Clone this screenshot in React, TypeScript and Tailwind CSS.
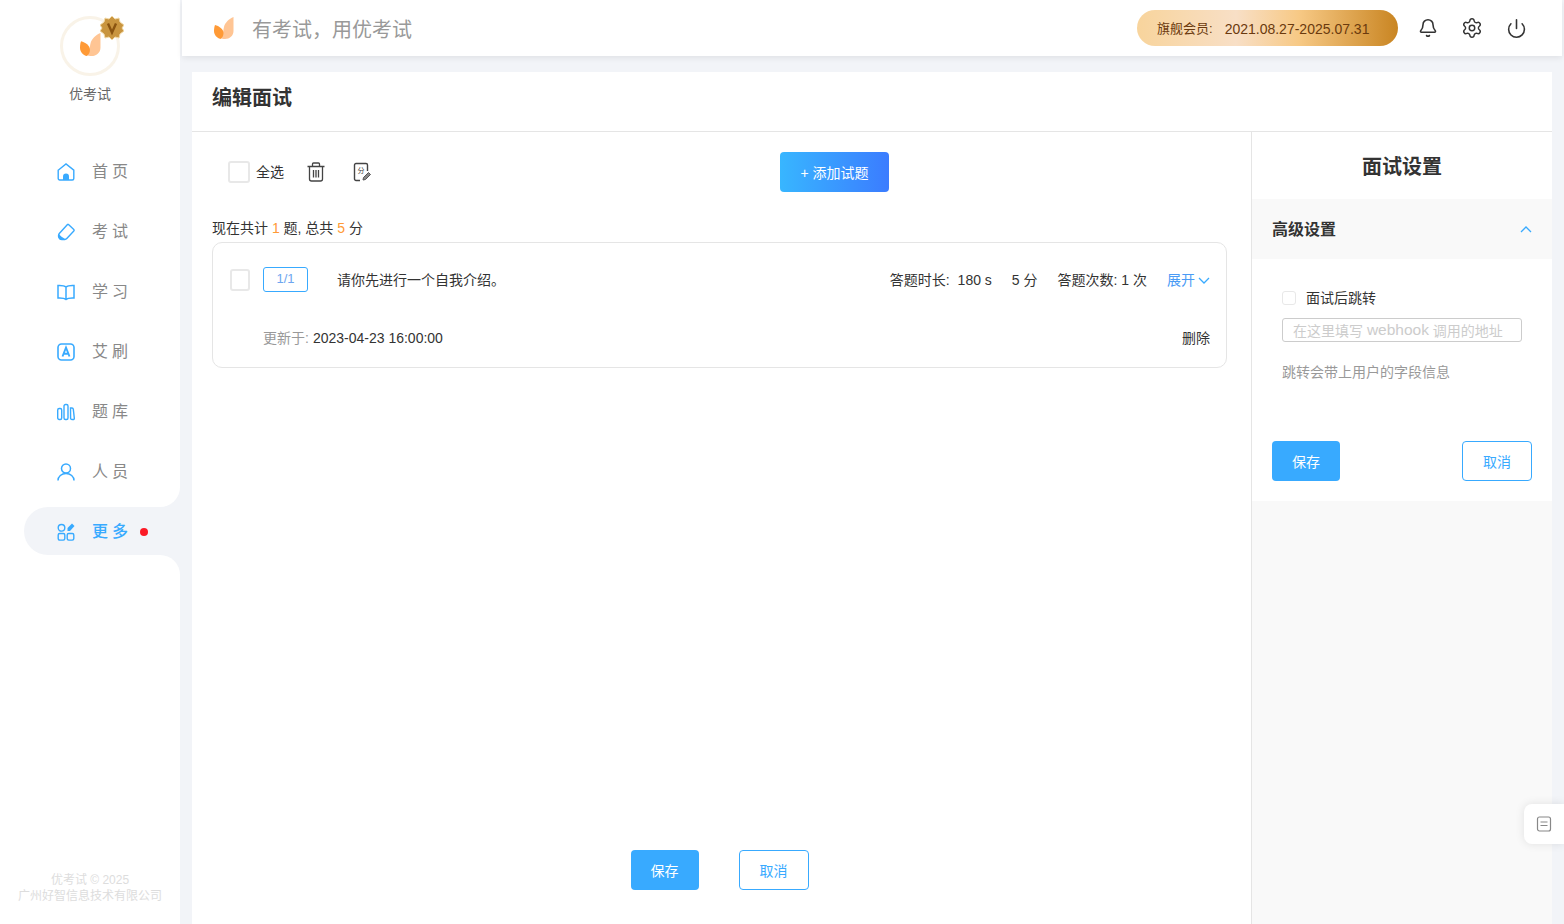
import { Bell, Power, Settings } from "lucide-react";
import type { ReactNode } from "react";

function Leaf({ className }: { className: string }) {
  return (
    <svg viewBox="0 0 20 22" className={className}>
      <path d="M19.5 0C19.5 0 19.5 14 19.5 14C19.5 18.8 15.5 22 11 22C9 22 7.5 21.6 6.5 21C9.5 18 9 14 10 10C11 5.5 15 2 19.5 0Z" fill="#ffc594" />
      <path d="M1 8C5 9 9.5 12 9.5 16C9.5 18.5 8.5 20.5 6.5 22C3 21 0 18 0 14C0 11.5 .4 9.5 1 8Z" fill="#ff9a36" />
    </svg>
  );
}

function Badge() {
  return (
    <svg viewBox="0 0 24 24" className="absolute -right-[7px] -top-[3px] h-6 w-6">
      <path
        d="M12 0l3 3 4-1 1 4 4 3-2 3 2 3-4 3-1 4-4-1-3 3-3-3-4 1-1-4-4-3 2-3-2-3 4-3 1-4 4 1z"
        fill="#c9953f"
        stroke="#f1d9a8"
        strokeWidth="1"
      />
      <path d="M8 7.5l4 9 4-9" fill="none" stroke="#8a5410" strokeWidth="2.4" />
    </svg>
  );
}

const iconBase = "h-[18px] w-[18px] shrink-0 text-[#38aaff]";

function HomeIcon() {
  return (
    <svg viewBox="0 0 18 18" fill="none" stroke="currentColor" strokeWidth="1.4" className={iconBase}>
      <path d="M1.2 7.2L9 1l7.800 6.200V15.500a1.500 1.500 0 0 1-1.500 1.500H2.700a1.500 1.500 0 0 1-1.500-1.500z" />
      <path d="M6 17v-3.500a3 3 0 0 1 6 0V17z" fill="currentColor" stroke="none" />
    </svg>
  );
}

function EraserIcon() {
  return (
    <svg viewBox="0 0 18 18" fill="none" stroke="currentColor" strokeWidth="1.4" className={iconBase}>
      <path d="M11.500 1.500l5.300 5a1 1 0 0 1 0 1.500l-7 7.500a3 3 0 0 1-2 1H5a3.500 3.500 0 0 1-3.500-3.500c0-1.200.4-2 1-2.700l8-8.800z" />
      <path d="M1.500 10.500c2 2.500 4 4 6.500 5.500-.7.700-1.500 1-2.500 1H5a3.500 3.500 0 0 1-3.500-3.500z" fill="currentColor" stroke="none" />
    </svg>
  );
}

function BookIcon() {
  return (
    <svg viewBox="0 0 18 18" fill="none" stroke="currentColor" strokeWidth="1.5" className={iconBase}>
      <path d="M9 4C7.500 2.700 5 2.300 1 2.500V15c4-.2 6.500.1 8 1.400 1.500-1.300 4-1.600 8-1.400V2.500C13 2.300 10.500 2.700 9 4zM9 4v12.500" />
    </svg>
  );
}

function AiIcon() {
  return (
    <svg viewBox="0 0 18 18" fill="none" stroke="currentColor" className={iconBase}>
      <rect x="1" y="1" width="16" height="16" rx="3.500" strokeWidth="1.600" />
      <path d="M5.500 13.500L9 4.500l3.500 9M6.800 10.800h4.400" strokeWidth="1.900" />
    </svg>
  );
}

function BarsIcon() {
  return (
    <svg viewBox="0 0 18 18" fill="none" stroke="currentColor" strokeWidth="1.400" className={iconBase}>
      <rect x="0.700" y="5.500" width="4" height="11" rx="1.500" />
      <rect x="7" y="1.500" width="4" height="15" rx="1.500" />
      <path d="M13.500 5h1.500c.8 0 1.200.5 1.300 1.200l1 9c.1.800-.4 1.300-1.200 1.300h-1.100c-.8 0-1.300-.4-1.400-1.200z" />
    </svg>
  );
}

function UserIcon() {
  return (
    <svg viewBox="0 0 18 18" fill="none" stroke="currentColor" strokeWidth="1.500" className={iconBase}>
      <circle cx="9" cy="5.500" r="4.500" />
      <path d="M1 17.500c0-4 3.500-7 8-7s8 3 8 7" />
    </svg>
  );
}

function GridIcon() {
  return (
    <svg viewBox="0 0 18 18" fill="none" stroke="currentColor" strokeWidth="1.400" className={iconBase}>
      <circle cx="4.500" cy="4.800" r="3.300" />
      <rect x="1.200" y="10.500" width="6.600" height="6.600" rx="1.500" />
      <rect x="10.200" y="10.500" width="6.600" height="6.600" rx="1.500" />
      <path d="M10.500 8V5l4.500-4.500 2.500 2.500-4.500 5z" fill="currentColor" stroke="none" />
    </svg>
  );
}

function Chevron({ up = false }: { up?: boolean }) {
  return (
    <svg viewBox="0 0 12 7" fill="none" stroke="#38aaff" strokeWidth="1.300" className="h-[7px] w-3 shrink-0">
      <path d={up ? "M1 6l5-5 5 5" : "M1 1l5 5 5-5"} />
    </svg>
  );
}

const navItems: { label: string; icon: ReactNode }[] = [
  { label: "首页", icon: <HomeIcon /> },
  { label: "考试", icon: <EraserIcon /> },
  { label: "学习", icon: <BookIcon /> },
  { label: "艾刷", icon: <AiIcon /> },
  { label: "题库", icon: <BarsIcon /> },
];

function NavRow({ label, icon, className = "" }: { label: string; icon: ReactNode; className?: string }) {
  return (
    <div className={`flex h-[60px] items-center gap-[17px] pl-[57px] ${className}`}>
      {icon}
      <span className="text-base tracking-[4px] text-[#888888]">{label}</span>
    </div>
  );
}

function Sidebar() {
  return (
    <aside className="flex w-[180px] shrink-0 flex-col bg-[#f2f4f8]">
      <div className="rounded-br-[20px] bg-white">
        <div className="flex h-[142px] flex-col items-center pt-4">
          <div className="relative flex h-[60px] w-[60px] items-center justify-center rounded-full border-[3px] border-[#f9f3e8] bg-white">
            <Leaf className="mb-[3px] h-[25px] w-[21px]" />
            <Badge />
          </div>
          <span className="mt-2 text-sm leading-5 text-[#666666]">优考试</span>
        </div>
        {navItems.map((item) => (
          <NavRow key={item.label} label={item.label} icon={item.icon} />
        ))}
        <NavRow label="人员" icon={<UserIcon />} className="box-content pb-[5px]" />
      </div>
      <div className="bg-white">
        <div className="ml-6 flex h-12 items-center gap-[17px] rounded-l-[24px] bg-[#f2f4f8] pl-[33px] pt-px">
          <GridIcon />
          <span className="text-base font-medium tracking-[4px] text-[#38aaff]">更多</span>
          <span className="-ml-[9px] mt-[1px] h-2 w-2 rounded-full bg-[#fb1a26]" />
        </div>
      </div>
      <div className="flex flex-1 flex-col items-center justify-end rounded-tr-[20px] bg-white pb-5 text-xs leading-4 text-[#dddddd]">
        <span>优考试 © 2025</span>
        <span>广州好智信息技术有限公司</span>
      </div>
    </aside>
  );
}

function Header() {
  return (
    <header className="flex h-14 shrink-0 items-center bg-white pl-8 pr-6 shadow-[0_2px_6px_rgba(0,0,0,0.08)]">
      <Leaf className="h-[22px] w-5" />
      <span className="ml-[18px] pt-1 text-xl text-[#999999]">有考试，用优考试</span>
      <div className="ml-auto flex h-9 w-[261px] items-center rounded-full bg-[linear-gradient(90deg,#f8d49c_0%,#f8dfc6_38%,#f7c985_62%,#c98522_100%)] pl-5 pt-[2px] text-sm text-[#6b3a0e]">
        <span className="text-[13px]">旗舰会员:</span>
        <span className="ml-3">2021.08.27-2025.07.31</span>
      </div>
      <div className="ml-2 flex items-center text-[#333333]">
        <span className="flex w-11 justify-center">
          <Bell size={20} strokeWidth={1.900} />
        </span>
        <span className="flex w-11 justify-center">
          <Settings size={22} strokeWidth={1.600} />
        </span>
        <span className="flex w-11 justify-center">
          <Power size={21} strokeWidth={1.800} />
        </span>
      </div>
    </header>
  );
}

function Checkbox({ className }: { className: string }) {
  return <span className={`block shrink-0 rounded-[3px] border-2 border-[#e8e8e8] bg-white ${className}`} />;
}

function SaveButton() {
  return (
    <button className="h-10 w-[68px] rounded bg-[#38aaff] pt-px text-sm text-white">保存</button>
  );
}

function CancelButton() {
  return (
    <button className="h-10 w-[70px] rounded border border-[#38aaff] bg-white pt-px text-sm text-[#38aaff]">取消</button>
  );
}

function TrashIcon() {
  return (
    <svg viewBox="0 0 18 20" fill="none" stroke="#444444" strokeWidth="1.300" className="h-5 w-[18px]">
      <path d="M0.500 4.500h17M5.500 4.500V2a1 1 0 0 1 1-1h5a1 1 0 0 1 1 1v2.500" />
      <path d="M2.500 4.500V17a2 2 0 0 0 2 2h9a2 2 0 0 0 2-2V4.500" />
      <path d="M6.500 8v7.500M9 8v7.500M11.500 8v7.500" />
    </svg>
  );
}

function FileScoreIcon() {
  return (
    <svg viewBox="0 0 18 20" fill="none" stroke="#444444" strokeWidth="1.400" className="h-5 w-[18px]">
      <path d="M7 18.500H3a1.500 1.500 0 0 1-1.500-1.500V3A1.500 1.500 0 0 1 3 1.500h10A1.500 1.500 0 0 1 14.500 3v6" />
      <text x="4.500" y="11" fontSize="7" fill="#444444" stroke="none">分</text>
      <path d="M10 18l.5-2.500 5-5 2 2-5 5z" fill="#888888" stroke="#555555" strokeWidth="1" />
    </svg>
  );
}

function QuestionCard() {
  return (
    <div className="mt-1 h-[126px] rounded-[10px] border border-[#e5e5e5] pl-[17px] pr-4 text-sm text-[#333333]">
      <div className="flex h-[73px] items-center">
        <Checkbox className="h-[22px] w-5" />
        <span className="ml-[13px] flex h-[25px] w-[45px] items-center justify-center rounded-[3px] border border-[#38aaff] text-[13px] text-[#6ea6f0]">
          1/1
        </span>
        <span className="ml-[29px]">请你先进行一个自我介绍。</span>
        <div className="ml-auto flex items-center">
          <span>答题时长:</span>
          <span className="ml-2">180 s</span>
          <span className="ml-5">5 分</span>
          <span className="ml-5">答题次数: 1 次</span>
          <span className="ml-5 text-[#4a9bf5]">展开</span>
          <span className="ml-[3px] mt-[2px]">
            <Chevron />
          </span>
        </div>
      </div>
      <div className="flex items-center pl-[33px] pt-3">
        <span className="text-[#999999]">更新于:</span>
        <span className="ml-1">2023-04-23 16:00:00</span>
        <span className="ml-auto">删除</span>
      </div>
    </div>
  );
}

function SettingsPanel() {
  return (
    <section className="flex w-[301px] shrink-0 flex-col border-l border-[#e5e5e5] bg-[#f9f9f9]">
      <h2 className="flex h-[67px] shrink-0 items-center justify-center bg-white pt-[2px] text-xl font-bold text-[#333333]">
        面试设置
      </h2>
      <div className="flex h-[60px] shrink-0 items-center justify-between pl-5 pr-5">
        <span className="pt-[2px] text-base font-bold text-[#333333]">高级设置</span>
        <Chevron up />
      </div>
      <div className="h-[242px] shrink-0 bg-white px-5 pt-[32px]">
        <div className="pl-[10px]">
          <div className="flex items-center text-sm text-[#333333]">
            <Checkbox className="h-[14px] w-[14px] !border" />
            <span className="ml-[10px] leading-[14px]">面试后跳转</span>
          </div>
          <div className="mt-[13px] flex h-6 w-[240px] items-center whitespace-pre rounded-[3px] border border-[#cccccc] pl-[10px] pt-px text-sm text-[#cccccc]">
            在这里填写 <span className="text-[15.5px]">webhook</span> 调用的地址
          </div>
          <p className="mt-[20px] text-sm leading-5 text-[#999999]">跳转会带上用户的字段信息</p>
        </div>
        <div className="mt-[59px] flex justify-between">
          <SaveButton />
          <CancelButton />
        </div>
      </div>
    </section>
  );
}

export default function App() {
  return (
    <div className="relative flex h-screen overflow-hidden bg-[#f2f4f8] font-['Liberation_Sans','Noto_Sans_CJK_SC',sans-serif]">
      <Sidebar />
      <div className="flex min-w-0 flex-1 flex-col px-[2px]">
        <Header />
        <main className="mx-[10px] mt-4 flex min-h-0 flex-1 flex-col bg-white">
          <div className="flex h-[60px] shrink-0 items-center border-b border-[#e5e5e5] pb-2 pl-5">
            <h1 className="text-xl font-bold text-[#333333]">编辑面试</h1>
          </div>
          <div className="flex min-h-0 flex-1">
            <section className="flex min-w-0 flex-1 flex-col pb-[34px] pl-5 pr-6 pt-5">
              <div className="flex h-10 shrink-0 items-center pl-4">
                <Checkbox className="h-[22px] w-[22px]" />
                <span className="ml-[6px] text-sm text-[#333333]">全选</span>
                <span className="ml-[23px]">
                  <TrashIcon />
                </span>
                <span className="ml-[28px]">
                  <FileScoreIcon />
                </span>
                <button className="ml-[409px] h-10 w-[109px] rounded bg-[linear-gradient(90deg,#38b6ff,#3b7cff)] pt-px text-sm text-white">
                  + 添加试题
                </button>
              </div>
              <p className="mt-[26px] text-sm leading-5 text-[#333333]">
                现在共计 <span className="text-[#ff9a36]">1</span> 题, 总共 <span className="text-[#ff9a36]">5</span> 分
              </p>
              <QuestionCard />
              <div className="mt-auto flex justify-center gap-10">
                <SaveButton />
                <CancelButton />
              </div>
            </section>
            <SettingsPanel />
          </div>
        </main>
      </div>
      <div className="absolute right-0 top-[804px] flex h-10 w-10 items-center justify-center rounded-l-lg bg-white shadow-[0_0_10px_rgba(0,0,0,0.1)]">
        <svg viewBox="0 0 16 16" fill="none" stroke="#888888" strokeWidth="1.200" className="h-4 w-4">
          <rect x="1.500" y="1" width="13" height="14" rx="2" />
          <path d="M4.500 6h7M4.500 9.500h7" />
        </svg>
      </div>
    </div>
  );
}
